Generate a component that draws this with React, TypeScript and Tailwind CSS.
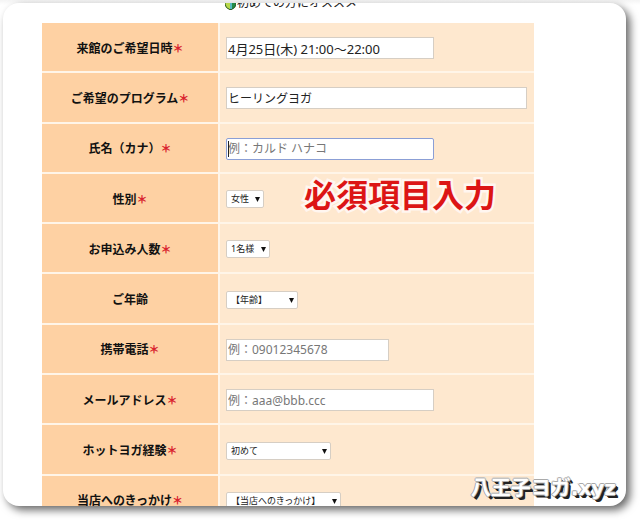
import { useState } from "react";

type Field = {
  id: string;
  label: string;
  required?: boolean;
  kind: "text" | "select";
  value?: string;
  placeholder?: string;
  className: string;
};

const fields: Field[] = [
  { id: "date", label: "来館のご希望日時", required: true, kind: "text", value: "4月25日(木) 21:00～22:00", className: "w-[208px] border-[#d6cec4] text-[13px]" },
  { id: "program", label: "ご希望のプログラム", required: true, kind: "text", value: "ヒーリングヨガ", className: "w-[301px] border-[#d6cec4] text-[12px]" },
  { id: "name", label: "氏名（カナ）", required: true, kind: "text", placeholder: "例：カルド ハナコ", className: "w-[208px] rounded-xs border-[#8b9fd6] text-[12px]" },
  { id: "sex", label: "性別", required: true, kind: "select", value: "女性", className: "w-[38px]" },
  { id: "people", label: "お申込み人数", required: true, kind: "select", value: "1名様", className: "w-[44px]" },
  { id: "age", label: "ご年齢", kind: "select", value: "【年齢】", className: "w-[72px]" },
  { id: "phone", label: "携帯電話", required: true, kind: "text", placeholder: "例：09012345678", className: "w-[163px] border-[#d6cec4] text-[12px]" },
  { id: "mail", label: "メールアドレス", required: true, kind: "text", placeholder: "例：aaa@bbb.ccc", className: "w-[208px] border-[#d6cec4] text-[12px]" },
  { id: "experience", label: "ホットヨガ経験", required: true, kind: "select", value: "初めて", className: "w-[105px]" },
  { id: "reason", label: "当店へのきっかけ", required: true, kind: "select", value: "【当店へのきっかけ】", className: "w-[115px]" },
];

function TextField({ field }: { field: Field }) {
  const [value, setValue] = useState(field.value ?? "");
  return (
    <div className="relative flex h-[22px]">
      <input
        id={field.id}
        type="text"
        value={value}
        placeholder={field.placeholder}
        onChange={(e) => setValue(e.target.value)}
        className={`h-[22px] border bg-white px-px text-[#222] outline-none placeholder:text-[#777] ${field.className}`}
      />
      {field.id === "name" && <span className="absolute top-[3px] left-[2px] h-4 w-px bg-[#222]" />}
    </div>
  );
}

function SelectField({ field }: { field: Field }) {
  return (
    <div className="flex h-[22px] items-center">
      <div className={`relative flex ${field.className}`}>
        <select
          id={field.id}
          className="h-[18px] w-full appearance-none rounded-xs border border-[#d6cec4] bg-white pl-1 text-[9px] leading-4 text-[#222] outline-none"
        >
          <option>{field.value}</option>
        </select>
        <svg viewBox="0 0 5 5" className="pointer-events-none absolute top-[7px] right-1 h-[5px] w-[5px]" aria-hidden="true">
          <path d="M0 0h5L2.5 5z" fill="#111" />
        </svg>
      </div>
    </div>
  );
}

export default function App() {
  return (
    <div className="h-screen bg-[linear-gradient(#f4f4f4,#ffffff_5px)] pt-[3px] pr-3.5 pb-3.5 pl-[3px] font-['Noto_Sans','Noto_Sans_CJK_JP',sans-serif]">
      <main className="relative h-full overflow-hidden rounded-2xl bg-white shadow-[4px_4px_8px_rgba(0,0,0,0.6)]">
        <p className="-mt-2 mb-3 ml-[222px] flex h-4 items-center gap-px text-[12px] leading-4 whitespace-nowrap text-[#222]">
          <svg viewBox="0 0 11 14" className="h-3.5 w-[11px]" aria-hidden="true">
            <path d="M0 0L5.5 4V14Q0 12 0 8z" fill="#b9d94c" stroke="#2c5b25" />
            <path d="M11 0L5.5 4V14Q11 12 11 8z" fill="#238b45" stroke="#2c5b25" />
            <path d="M6 6V13" stroke="#55b9c0" strokeWidth="2" />
          </svg>
          初めての方にオススメ
        </p>
        <table className="ml-[39px] h-[503px] w-[492px] table-fixed border-separate border-spacing-0">
          <tbody>
            {fields.map((field) => (
              <tr key={field.id}>
                <th className="w-[178px] border-r-2 border-b-2 border-[#fff5e8] bg-[#fed1a3] px-0 pt-0.5 pb-0 text-center text-[12px] leading-4 font-bold text-[#111]">
                  <label htmlFor={field.id}>
                    {field.label}
                    {field.required && <span className="font-['Noto_Sans_CJK_JP',sans-serif] text-[11px] font-black text-[#d9232e]">＊</span>}
                  </label>
                </th>
                <td className="border-b-2 border-[#fff5e8] bg-[#fee8cf] pt-0.5 pr-0 pb-0 pl-1.5">
                  {field.kind === "text" ? <TextField field={field} /> : <SelectField field={field} />}
                </td>
              </tr>
            ))}
          </tbody>
        </table>
        <p className="absolute top-[170px] left-[301px] font-['Noto_Sans_CJK_JP',sans-serif] text-[32px] leading-10 font-bold whitespace-nowrap text-[#dc1515] [-webkit-text-stroke:5px_#fff6f0] [paint-order:stroke_fill]">
          必須項目入力
        </p>
        <p className="absolute right-2.5 bottom-1 font-['DejaVu_Sans','Noto_Sans_CJK_JP',sans-serif] text-[20px] leading-7 font-bold whitespace-nowrap text-white [-webkit-text-stroke:2px_#e4e4e4] [paint-order:stroke_fill] [text-shadow:1px_0_0_#aaa,-1px_0_0_#aaa,0_1px_0_#aaa,0_-1px_0_#aaa,2px_2px_0_#222,3px_3px_0_#222]">
          八王子ヨガ.xyz
        </p>
      </main>
    </div>
  );
}
